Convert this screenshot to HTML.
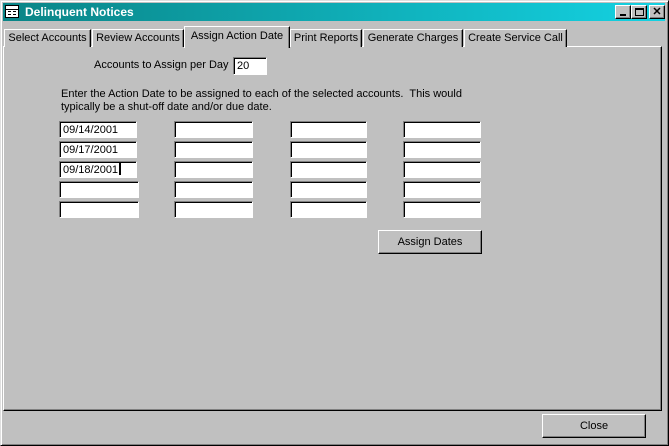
<!DOCTYPE html>
<html><head><meta charset="utf-8"><style>
*{box-sizing:border-box;margin:0;padding:0}
body{width:669px;height:446px;background:#c0c0c0;font-family:"Liberation Sans",Arial,sans-serif;font-size:11px;color:#000;position:relative;overflow:hidden}
.abs{position:absolute}
.win{left:0;top:0;width:669px;height:446px;border-top:1px solid #dfdfdf;border-left:1px solid #dfdfdf;border-right:1px solid #000;border-bottom:1px solid #000;box-shadow:inset 1px 1px 0 #fff,inset -1px -1px 0 #808080}
.title{left:3px;top:3px;width:662px;height:18px;background:linear-gradient(to right,#0a8486,#14d2e2);color:#fff;font-weight:bold;font-size:12px;line-height:18px;padding-left:22px}
.tb{top:5px;width:16px;height:14px;background:#c0c0c0;border-top:1px solid #fff;border-left:1px solid #fff;border-right:1px solid #000;border-bottom:1px solid #000;box-shadow:inset -1px -1px 0 #808080}
.tab{top:29px;height:18px;background:#c0c0c0;border-top:1px solid #fff;border-left:1px solid #fff;border-right:1px solid #000;box-shadow:inset -1px 0 0 #808080;line-height:16px;text-align:center;font-size:11px}
.panel{left:3px;top:46px;width:659px;height:365px;border-top:1px solid #fff;border-left:1px solid #fff;border-right:1px solid #000;border-bottom:1px solid #000;box-shadow:inset -1px -1px 0 #808080}
.tx{height:17px;background:#fff;border-top:1px solid #808080;border-left:1px solid #808080;border-right:1px solid #fff;border-bottom:1px solid #fff;box-shadow:inset 1px 1px 0 #000;padding-left:3px;padding-top:1px;line-height:15px;font-size:11px}
.btn{background:#c0c0c0;border-top:1px solid #fff;border-left:1px solid #fff;border-right:1px solid #000;border-bottom:1px solid #000;box-shadow:inset -1px -1px 0 #808080;text-align:center;font-size:11px}
</style></head><body>
<div class="abs win"></div>
<div class="abs title">Delinquent Notices</div>
<div class="abs" style="left:5px;top:5px;width:14px;height:13px;background:#fff;border:1px solid #000"><div style="position:absolute;left:0;top:3px;width:12px;height:1px;background:#000"></div><div style="position:absolute;left:2px;top:5px;width:3px;height:1px;background:#000"></div><div style="position:absolute;left:7px;top:5px;width:3px;height:1px;background:#000"></div><div style="position:absolute;left:2px;top:8px;width:3px;height:1px;background:#000"></div><div style="position:absolute;left:7px;top:8px;width:3px;height:1px;background:#000"></div></div>
<div class="abs tb" style="left:615px"><div style="position:absolute;left:4px;top:8px;width:6px;height:2px;background:#000"></div></div>
<div class="abs tb" style="left:631px"><div style="position:absolute;left:3px;top:2px;width:9px;height:8px;border:1px solid #000;border-top-width:2px"></div></div>
<div class="abs tb" style="left:649px;font-size:11px;font-weight:bold;line-height:12px;text-align:center">✕</div>

<div class="abs panel"></div>
<div class="abs tab" style="left:4px;width:87px">Select Accounts</div>
<div class="abs tab" style="left:92px;width:92px">Review Accounts</div>
<div class="abs tab" style="left:184px;top:26px;width:106px;height:22px;line-height:18px;z-index:2">Assign Action Date</div>
<div class="abs tab" style="left:290px;width:72px">Print Reports</div>
<div class="abs tab" style="left:363px;width:100px">Generate Charges</div>
<div class="abs tab" style="left:464px;width:103px">Create Service Call</div>

<div class="abs" style="left:94px;top:59px">Accounts to Assign per Day</div>
<div class="abs tx" style="left:233px;top:57px;width:34px;height:18px">20</div>
<div class="abs" style="left:61px;top:88px;line-height:13px">Enter the Action Date to be assigned to each of the selected accounts.&nbsp; This would<br>typically be a shut-off date and/or due date.</div>

<div class="abs tx" style="left:59px;top:121px;width:78px">09/14/2001</div>
<div class="abs tx" style="left:59px;top:141px;width:78px">09/17/2001</div>
<div class="abs tx" style="left:59px;top:161px;width:78px">09/18/2001<span style="display:inline-block;width:2px;height:12px;background:#000;vertical-align:-2px;margin-left:1px"></span></div>
<div class="abs tx" style="left:59px;top:181px;width:80px"></div>
<div class="abs tx" style="left:59px;top:201px;width:80px"></div>

<div class="abs tx" style="left:174px;top:121px;width:79px"></div>
<div class="abs tx" style="left:174px;top:141px;width:79px"></div>
<div class="abs tx" style="left:174px;top:161px;width:79px"></div>
<div class="abs tx" style="left:174px;top:181px;width:79px"></div>
<div class="abs tx" style="left:174px;top:201px;width:79px"></div>

<div class="abs tx" style="left:290px;top:121px;width:77px"></div>
<div class="abs tx" style="left:290px;top:141px;width:77px"></div>
<div class="abs tx" style="left:290px;top:161px;width:77px"></div>
<div class="abs tx" style="left:290px;top:181px;width:77px"></div>
<div class="abs tx" style="left:290px;top:201px;width:77px"></div>

<div class="abs tx" style="left:403px;top:121px;width:78px"></div>
<div class="abs tx" style="left:403px;top:141px;width:78px"></div>
<div class="abs tx" style="left:403px;top:161px;width:78px"></div>
<div class="abs tx" style="left:403px;top:181px;width:78px"></div>
<div class="abs tx" style="left:403px;top:201px;width:78px"></div>

<div class="abs btn" style="left:378px;top:230px;width:104px;height:24px;line-height:22px">Assign Dates</div>
<div class="abs btn" style="left:542px;top:414px;width:104px;height:24px;line-height:22px">Close</div>
</body></html>
